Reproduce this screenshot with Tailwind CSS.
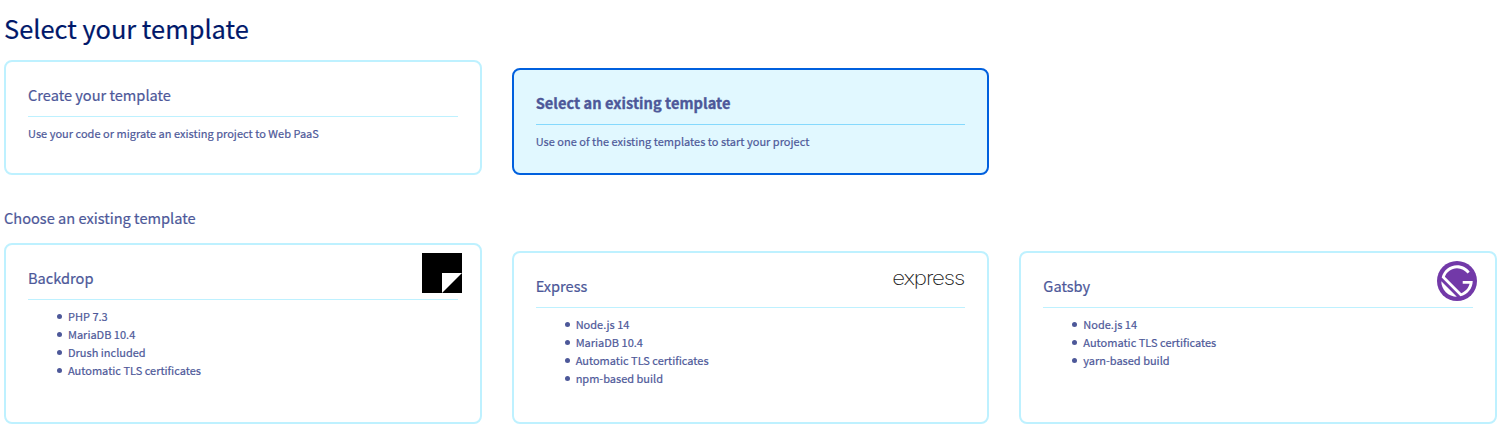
<!DOCTYPE html>
<html lang="en">
<head>
<meta charset="utf-8">
<title>Select your template</title>
<script src="https://cdn.jsdelivr.net/npm/@tailwindcss/browser@4"></script>
</head>
<body class="bg-white text-[#4d5899] font-['Noto_Sans_CJK_SC',sans-serif] h-[427px] overflow-hidden [-webkit-text-stroke:0.2px]">
<main class="pl-1 pr-[3px]">
  <h1 class="h-[60px] pt-[8px] text-[25.4px] leading-[40px] text-[#00186a]">Select your template</h1>
  <section class="grid grid-cols-3 gap-[30px] h-[115px]">
    <article class="border-2 border-[#bef1ff] rounded-lg px-[22px]">
      <h2 class="h-[55px] pt-[21px] text-[14.6px] leading-6 border-b border-[#bef1ff]">Create your template</h2>
      <p class="pt-[7px] text-[11px] leading-[18px] tracking-[0.02px]">Use your code or migrate an existing project to Web PaaS</p>
    </article>
    <article class="mt-2 border-2 border-[#0060de] bg-[#e1f8ff] rounded-lg px-[22px]">
      <h2 class="h-[55px] pt-[21px] text-[14.6px] leading-6 font-bold tracking-[0.04px] [-webkit-text-stroke:0.35px] border-b border-[#85d9fd]">Select an existing template</h2>
      <p class="pt-[7px] text-[11px] leading-[18px] tracking-[0.02px]">Use one of the existing templates to start your project</p>
    </article>
  </section>
  <h3 class="h-[68px] pt-[31px] text-[14.6px] leading-6">Choose an existing template</h3>
  <section class="grid grid-cols-3 gap-[30px] h-[181px]">
    <article class="relative border-2 border-[#bef1ff] rounded-lg px-[22px]">
      <h2 class="h-[55px] pt-[21px] text-[14.6px] leading-6 border-b border-[#bef1ff]">Backdrop</h2>
      <ul class="pt-[7px] pl-[29px] text-[11px] leading-[18px] *:flex *:items-center *:gap-1.5 *:before:size-[5px] *:before:rounded-full *:before:bg-current *:before:content-['']">
        <li>PHP 7.3</li><li>MariaDB 10.4</li><li>Drush included</li><li>Automatic TLS certificates</li>
      </ul>
      <svg class="absolute top-2 right-[18px] size-10" viewBox="0 0 40 40"><path d="M0 0h40v40H0z"/><path d="M20 20h20L20 40z" fill="#fff"/></svg>
    </article>
    <article class="relative mt-2 border-2 border-[#bef1ff] rounded-lg px-[22px]">
      <h2 class="h-[55px] pt-[21px] text-[14.6px] leading-6 border-b border-[#bef1ff]">Express</h2>
      <ul class="pt-[7px] pl-[29px] text-[11px] leading-[18px] *:flex *:items-center *:gap-1.5 *:before:size-[5px] *:before:rounded-full *:before:bg-current *:before:content-['']">
        <li>Node.js 14</li><li>MariaDB 10.4</li><li>Automatic TLS certificates</li><li>npm-based build</li>
      </ul>
      <svg class="absolute top-2 right-[20px] w-[76px] h-10 font-['Inter'] [-webkit-text-stroke:0]" viewBox="0 0 76 40"><text x="1.200" y="24" font-size="20" font-weight="200" letter-spacing="-1" textLength="72" lengthAdjust="spacingAndGlyphs" fill="#222">express</text></svg>
    </article>
    <article class="relative mt-2 border-2 border-[#bef1ff] rounded-lg px-[22px]">
      <h2 class="h-[55px] pt-[21px] text-[14.6px] leading-6 border-b border-[#bef1ff]">Gatsby</h2>
      <ul class="pt-[7px] pl-[29px] text-[11px] leading-[18px] *:flex *:items-center *:gap-1.5 *:before:size-[5px] *:before:rounded-full *:before:bg-current *:before:content-['']">
        <li>Node.js 14</li><li>Automatic TLS certificates</li><li>yarn-based build</li>
      </ul>
      <svg class="absolute top-2 right-[18px] size-10" viewBox="0 0 28 28"><circle cx="14" cy="14" r="14" fill="#7239a8"/><path fill="#fff" d="M6.2 21.8C4.1 19.7 3 16.9 3 14.2L13.9 25c-2.8-.1-5.6-1.1-7.7-3.2zm10.2 2.9L3.3 11.6C4.4 6.7 8.8 3 14 3c3.7 0 6.900 1.800 8.900 4.500l-1.500 1.300C19.700 6.500 17 5 14 5c-3.900 0-7.200 2.500-8.500 6L17 22.500c2.900-1 5.100-3.500 5.800-6.500H18v-2h7c0 5.200-3.700 9.600-8.600 10.700z"/></svg>
    </article>
  </section>
</main>
</body>
</html>
